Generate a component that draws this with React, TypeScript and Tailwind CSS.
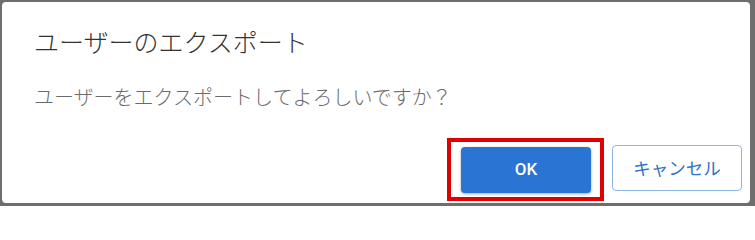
const jp = '"Noto Sans CJK JP", "Noto Sans", sans-serif';

export default function App() {
  return (
    <div className="w-[755px] h-[206px] bg-[#6e6e6e] p-[2px] pr-[5px] pb-[3px]">
      <div
        className="h-full bg-white rounded-[4px] flex flex-col"
        style={{ fontFamily: jp }}
      >
        {/* タイトル */}
        <div className="pl-[32px] pt-[22px] h-[80px]">
          <h1 className="text-[25px] leading-[34px] font-light text-[#333]">
            ユーザーのエクスポート
          </h1>
        </div>

        {/* 本文 */}
        <p className="pl-[32px] text-[20px] leading-[30px] font-light text-[#6a6a6a]">
          ユーザーをエクスポートしてよろしいですか？
        </p>

        {/* ボタン */}
        <div className="mt-auto flex justify-end items-end pr-[8px] pb-[2px] gap-[8px]">
          <div className="border-4 border-[#e00000] pl-[10px] pr-[9px] pt-[5px] pb-[4px]">
            <button
              type="button"
              className="w-[130px] h-[46px] rounded-[4px] bg-[#2a74d3] text-white text-[17px] font-medium shadow-[0_1px_3px_rgba(0,0,0,0.35)]"
              style={{ fontFamily: 'Roboto, "Liberation Sans", sans-serif' }}
            >
              OK
            </button>
          </div>
          <button
            type="button"
            className="w-[130px] h-[46px] mb-[10px] rounded-[4px] bg-white border border-[#8db6e8] text-[#2f72c8] text-[17.5px]"
          >
            キャンセル
          </button>
        </div>
      </div>
    </div>
  );
}
